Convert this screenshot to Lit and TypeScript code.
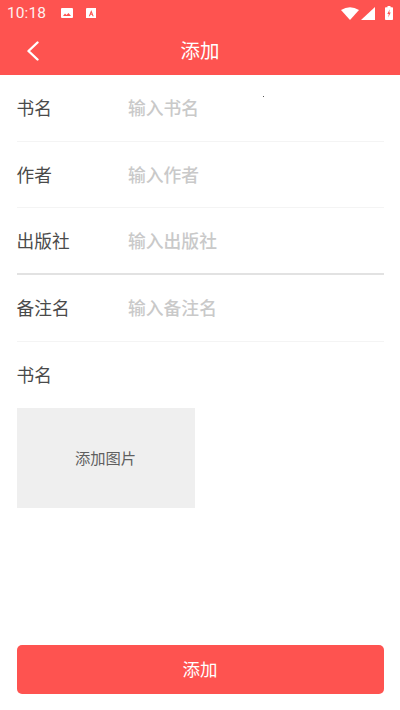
import { LitElement, html, css } from "lit";
import { customElement } from "lit/decorators.js";

const rows = [
  { label: "书名", ph: "输入书名", line: "" },
  { label: "作者", ph: "输入作者", line: "" },
  { label: "出版社", ph: "输入出版社", line: "strong" },
  { label: "备注名", ph: "输入备注名", line: "" },
];

@customElement("app-root")
export class AppRoot extends LitElement {
  static styles = css`
    :host {
      display: flex;
      flex-direction: column;
      width: 400px;
      height: 710px;
      background: #fff;
      font-family: "Noto Sans CJK SC", "Noto Sans", sans-serif;
      overflow: hidden;
      position: relative;
    }
    .head { background: #fe5350; height: 75px; flex: none; color: #fff; display: flex; flex-direction: column; }
    .status { height: 25px; box-sizing: border-box; padding: 1px 7px 0 7px; display: flex; align-items: center; }
    .time { font: 400 15.5px Roboto, sans-serif; color: #fdf0ef; width: 53.5px; letter-spacing: 0.1px; }
    .status svg { display: block; }
    .notif { display: flex; gap: 13px; align-items: center; }
    .sys { margin-left: auto; display: flex; align-items: center; gap: 2px; }
    .bar { flex: 1; display: flex; align-items: center; justify-content: center; position: relative; }
    .title { font-size: 19.5px; line-height: 50px; }
    .back { position: absolute; left: 26px; top: 16px; }
    .form { padding: 0 16.5px; display: flex; flex-direction: column; flex: none; }
    .row { height: 66.67px; box-sizing: border-box; padding-bottom: 1px; display: flex; align-items: center; border-bottom: 1px solid #f4f4f4; font-size: 17.7px; color: #4a4a4a; }
    .row.strong { border-bottom: 2px solid #e2e2e2; }
    .row.plain { border-bottom: none; }
    .label { width: 111.5px; flex: none; }
    .ph { color: #c9c9c9; font-size: 17.8px; font-weight: 500; }
    .pic { width: 178px; height: 100px; padding-bottom: 2px; box-sizing: border-box; background: #efefef; display: flex; align-items: center; justify-content: center; font-size: 15.3px; color: #5f5f5f; }
    .btn { position: absolute; left: 16.5px; right: 16.5px; top: 645px; height: 49px; padding-bottom: 2px; box-sizing: border-box; border-radius: 5px; background: #fe5350; color: #fff; font-size: 17.5px; display: flex; align-items: center; justify-content: center; }
    .dot { position: absolute; left: 263px; top: 96px; width: 1px; height: 1px; background: #555; }
  `;

  render() {
    return html`
      <div class="head">
        <div class="status">
          <span class="time">10:18</span>
          <span class="notif">
            <svg width="12" height="10" viewBox="0 0 12 10"><rect width="12" height="10" rx="1" fill="#fff"/><path d="M2 8 L4 5.5 L5.5 7 L7.5 5 L10 8 Z" fill="#fe5350"/></svg>
            <svg width="10.5" height="10.5" viewBox="0 0 10.5 10.5"><rect width="10.5" height="10.5" rx="1" fill="#fff"/><path d="M5.25 2 L2.8 8.2 H4 L4.5 6.8 H6 L6.5 8.2 H7.7 Z" fill="#fe5350"/><path d="M4.9 5.8 L5.25 4.7 L5.6 5.8 Z" fill="#fff"/></svg>
          </span>
          <span class="sys">
            <svg width="18" height="13" viewBox="0 0 18 13"><path d="M0 3 Q9 -2.5 18 3 L9 13 Z" fill="#fff"/></svg>
            <svg width="14" height="13" viewBox="0 0 14 13"><path d="M14 0 V13 H0 Z" fill="#fff"/></svg>
            <svg width="8" height="14" viewBox="0 0 8 14" style="margin-left:8px"><path d="M2.5 0 H5.5 V1.2 H7.2 Q8 1.2 8 2 V13.2 Q8 14 7.2 14 H0.8 Q0 14 0 13.2 V2 Q0 1.2 0.8 1.2 H2.5 Z" fill="#fff"/><path d="M4.8 3.2 L2.3 8 H3.8 L3.2 11.5 L5.7 6.6 H4.2 Z" fill="#fe5350"/></svg>
          </span>
        </div>
        <div class="bar">
          <svg class="back" width="14" height="20" viewBox="0 0 14 20"><path d="M11.5 1.5 L2.5 10 L11.5 18.5" fill="none" stroke="#fff" stroke-width="2.4" stroke-linecap="round" stroke-linejoin="round"/></svg>
          <span class="title">添加</span>
        </div>
      </div>
      <div class="form">
        ${rows.map(
          (r) => html`<div class="row ${r.line}"><span class="label">${r.label}</span><span class="ph">${r.ph}</span></div>`
        )}
        <div class="row plain"><span class="label">书名</span></div>
        <div class="pic">添加图片</div>
      </div>
      <div class="btn">添加</div>
      <div class="dot"></div>
    `;
  }
}
